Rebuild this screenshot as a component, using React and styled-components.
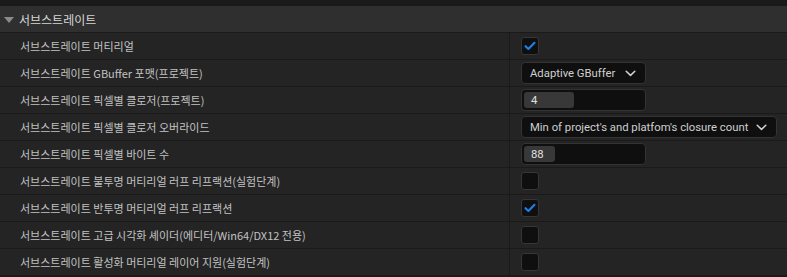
import React from "react";
import styled, { createGlobalStyle } from "styled-components";

const Global = createGlobalStyle`
  html, body { margin: 0; padding: 0; background: #1a1a1a; }
  body { font-family: "Noto Sans CJK KR", "Noto Sans", sans-serif; }
  * { box-sizing: border-box; }
`;

const Page = styled.div`
  width: 787px;
  height: 277px;
  background: #1a1a1a;
  padding-top: 6px;
  overflow: hidden;
`;

const Header = styled.div`
  height: 27px;
  background: #2f2f2f;
  display: flex;
  align-items: center;
  padding-left: 4px;
  gap: 5px;
  color: #d6d6d6;
  font-size: 12px;
  border-bottom: 1px solid #1a1a1a;
`;

const Triangle = styled.span`
  width: 0;
  height: 0;
  border-left: 5px solid transparent;
  border-right: 5px solid transparent;
  border-top: 6px solid #8a8a8a;
  margin-top: 1px;
`;

const Rows = styled.div`
  display: flex;
  flex-direction: column;
  gap: 1px;
  background: #1a1a1a;
`;

const Row = styled.div`
  display: grid;
  grid-template-columns: 509px 1px 1fr;
  height: 26px;
  background: #242424;
`;

const Label = styled.div`
  display: flex;
  align-items: center;
  padding-left: 20px;
  color: #c2c2c2;
  font-size: 11px;
  white-space: nowrap;
`;

const Divider = styled.div`
  background: #1a1a1a;
`;

const Value = styled.div`
  display: flex;
  align-items: center;
  padding-left: 11px;
`;

const Check = styled.div`
  width: 18px;
  height: 18px;
  border-radius: 3px;
  background: #0f0f0f;
  border: 1px solid #363636;
  display: flex;
  align-items: center;
  justify-content: center;
`;

const Combo = styled.div`
  height: 22px;
  width: ${(p) => p.$w}px;
  border-radius: 4px;
  background: #0f0f0f;
  border: 1px solid #333333;
  display: flex;
  align-items: center;
  padding-left: 8px;
  gap: ${(p) => p.$gap}px;
  color: #d0d0d0;
  font-family: Roboto, "Noto Sans", sans-serif;
  font-size: 11.3px;
  white-space: nowrap;
`;

const Spin = styled.div`
  height: 22px;
  width: 125px;
  border-radius: 4px;
  background: #0f0f0f;
  border: 1px solid #333333;
  padding: 2px;
  display: flex;
`;

const Fill = styled.div`
  height: 100%;
  border-radius: 3px;
  background: #383838;
  color: #e0e0e0;
  font-family: Roboto, "Noto Sans", sans-serif;
  font-size: 11.3px;
  display: flex;
  align-items: center;
  padding-left: 7px;
`;

const CheckMark = () => (
  <svg width="12" height="10" viewBox="0 0 12 10">
    <path d="M1.5 5.2 L4.4 8 L10.5 1.8" fill="none" stroke="#1f7fe6" strokeWidth="2.1" strokeLinecap="round" strokeLinejoin="round" />
  </svg>
);

const Chevron = () => (
  <svg width="11" height="7" viewBox="0 0 11 7">
    <path d="M1.2 1.2 L5.5 5.4 L9.8 1.2" fill="none" stroke="#d0d0d0" strokeWidth="1.5" strokeLinecap="round" strokeLinejoin="round" />
  </svg>
);

const rows = [
  { label: "서브스트레이트 머티리얼", type: "check", on: true },
  { label: "서브스트레이트 GBuffer 포맷(프로젝트)", type: "combo", text: "Adaptive GBuffer", w: 125, gap: 10 },
  { label: "서브스트레이트 픽셀별 클로저(프로젝트)", type: "spin", text: "4", fill: 50 },
  { label: "서브스트레이트 픽셀별 클로저 오버라이드", type: "combo", text: "Min of project's and platfom's closure count", w: 256, gap: 8 },
  { label: "서브스트레이트 픽셀별 바이트 수", type: "spin", text: "88", fill: 31 },
  { label: "서브스트레이트 불투명 머티리얼 러프 리프랙션(실험단계)", type: "check", on: false },
  { label: "서브스트레이트 반투명 머티리얼 러프 리프랙션", type: "check", on: true },
  { label: "서브스트레이트 고급 시각화 셰이더(에디터/Win64/DX12 전용)", type: "check", on: false },
  { label: "서브스트레이트 활성화 머티리얼 레이어 지원(실험단계)", type: "check", on: false },
];

export default function App() {
  return (
    <>
      <Global />
      <Page>
        <Header>
          <Triangle />
          <span>서브스트레이트</span>
        </Header>
        <Rows>
          {rows.map((r, i) => (
            <Row key={i}>
              <Label>{r.label}</Label>
              <Divider />
              <Value>
                {r.type === "check" && <Check>{r.on && <CheckMark />}</Check>}
                {r.type === "combo" && (
                  <Combo $w={r.w} $gap={r.gap}>
                    <span>{r.text}</span>
                    <Chevron />
                  </Combo>
                )}
                {r.type === "spin" && (
                  <Spin>
                    <Fill style={{ width: r.fill }}>{r.text}</Fill>
                  </Spin>
                )}
              </Value>
            </Row>
          ))}
        </Rows>
      </Page>
    </>
  );
}
